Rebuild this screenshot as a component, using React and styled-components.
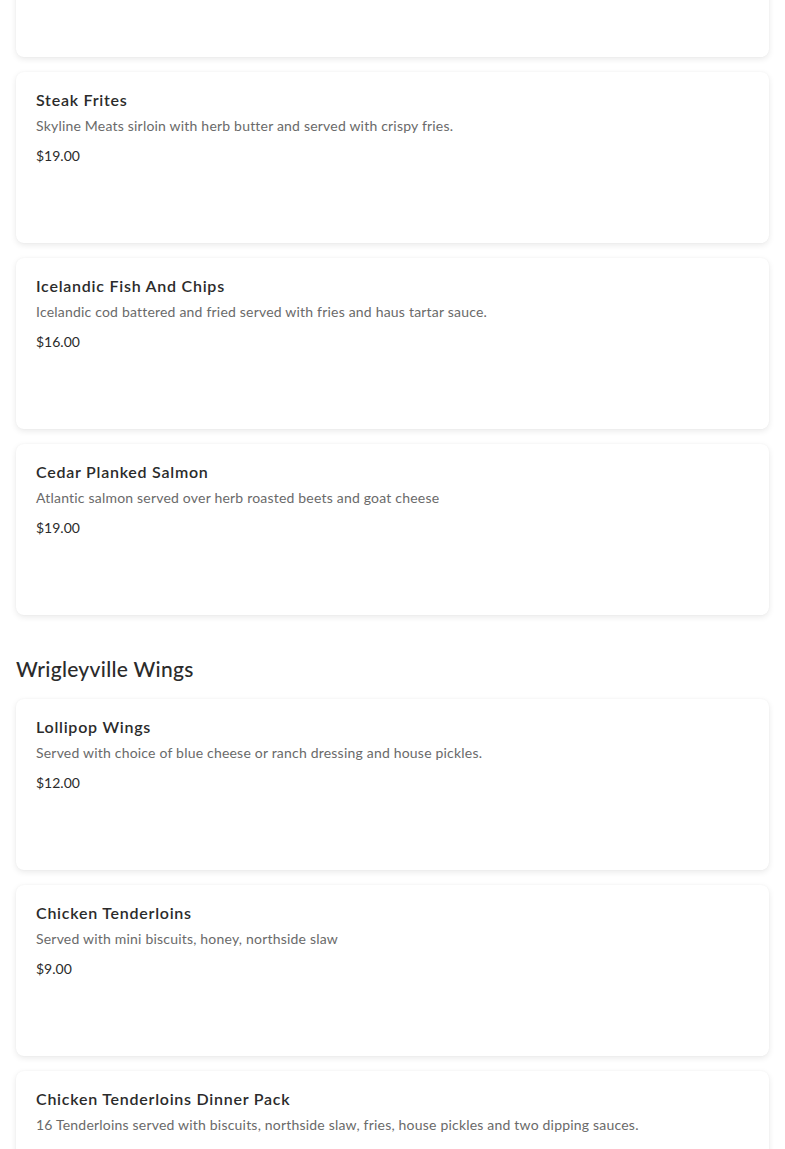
import React from 'react'
import styled, { createGlobalStyle } from 'styled-components'

const GlobalStyle = createGlobalStyle`
  html, body {
    margin: 0;
    padding: 0;
    background: #ffffff;
  }
  body {
    font-family: "Lato", "Open Sans", sans-serif;
    color: #2b2b2b;
    -webkit-font-smoothing: antialiased;
  }
`

const sections = [
  {
    title: null,
    items: [
      { name: 'Previous Item', description: '', price: '' },
      {
        name: 'Steak Frites',
        description: 'Skyline Meats sirloin with herb butter and served with crispy fries.',
        price: '$19.00'
      },
      {
        name: 'Icelandic Fish And Chips',
        description: 'Icelandic cod battered and fried served with fries and haus tartar sauce.',
        price: '$16.00'
      },
      {
        name: 'Cedar Planked Salmon',
        description: 'Atlantic salmon served over herb roasted beets and goat cheese',
        price: '$19.00'
      }
    ]
  },
  {
    title: 'Wrigleyville Wings',
    items: [
      {
        name: 'Lollipop Wings',
        description: 'Served with choice of blue cheese or ranch dressing and house pickles.',
        price: '$12.00'
      },
      {
        name: 'Chicken Tenderloins',
        description: 'Served with mini biscuits, honey, northside slaw',
        price: '$9.00'
      },
      {
        name: 'Chicken Tenderloins Dinner Pack',
        description: '16 Tenderloins served with biscuits, northside slaw, fries, house pickles and two dipping sauces.',
        price: '$38.00'
      }
    ]
  }
]

export default function App () {
  return (
    <>
      <GlobalStyle />
      <Page>
        {sections.map((section, i) => (
          <Section key={i}>
            {section.title && <SectionTitle>{section.title}</SectionTitle>}
            <CardList>
              {section.items.map((item, j) => (
                <Card key={j} $hidden={i === 0 && j === 0}>
                  <ItemName>{item.name}</ItemName>
                  <ItemDescription>{item.description}</ItemDescription>
                  <ItemPrice>{item.price}</ItemPrice>
                </Card>
              ))}
            </CardList>
          </Section>
        ))}
      </Page>
    </>
  )
}

const Page = styled.main`
  padding: 0 16px 40px;
  margin-top: -114px;
  display: flex;
  flex-direction: column;
  gap: 40px;
`

const Section = styled.section`
  display: flex;
  flex-direction: column;
  gap: 16px;
`

const SectionTitle = styled.h2`
  margin: 0;
  font-size: 21px;
  line-height: 28px;
  font-weight: 500;
  color: #2b2b2b;
  letter-spacing: 0.3px;
`

const CardList = styled.div`
  display: flex;
  flex-direction: column;
  gap: 15px;
`

const Card = styled.article`
  box-sizing: border-box;
  height: 171px;
  padding: 18px 20px;
  background: #ffffff;
  border-radius: 8px;
  box-shadow: 0 2px 6px rgba(0, 0, 0, 0.09), 0 0 2px rgba(0, 0, 0, 0.04);
  display: flex;
  flex-direction: column;
  & > * {
    visibility: ${({ $hidden }) => ($hidden ? 'hidden' : 'visible')};
  }
`

const ItemName = styled.h3`
  margin: 0;
  font-size: 16px;
  line-height: 20px;
  font-weight: 600;
  letter-spacing: 0.75px;
  color: #2b2b2b;
`

const ItemDescription = styled.p`
  margin: 6px 0 0;
  font-size: 14px;
  line-height: 20px;
  letter-spacing: 0.2px;
  color: #6a6a6a;
`

const ItemPrice = styled.div`
  margin-top: 10px;
  font-size: 14px;
  line-height: 20px;
  color: #2b2b2b;
`
